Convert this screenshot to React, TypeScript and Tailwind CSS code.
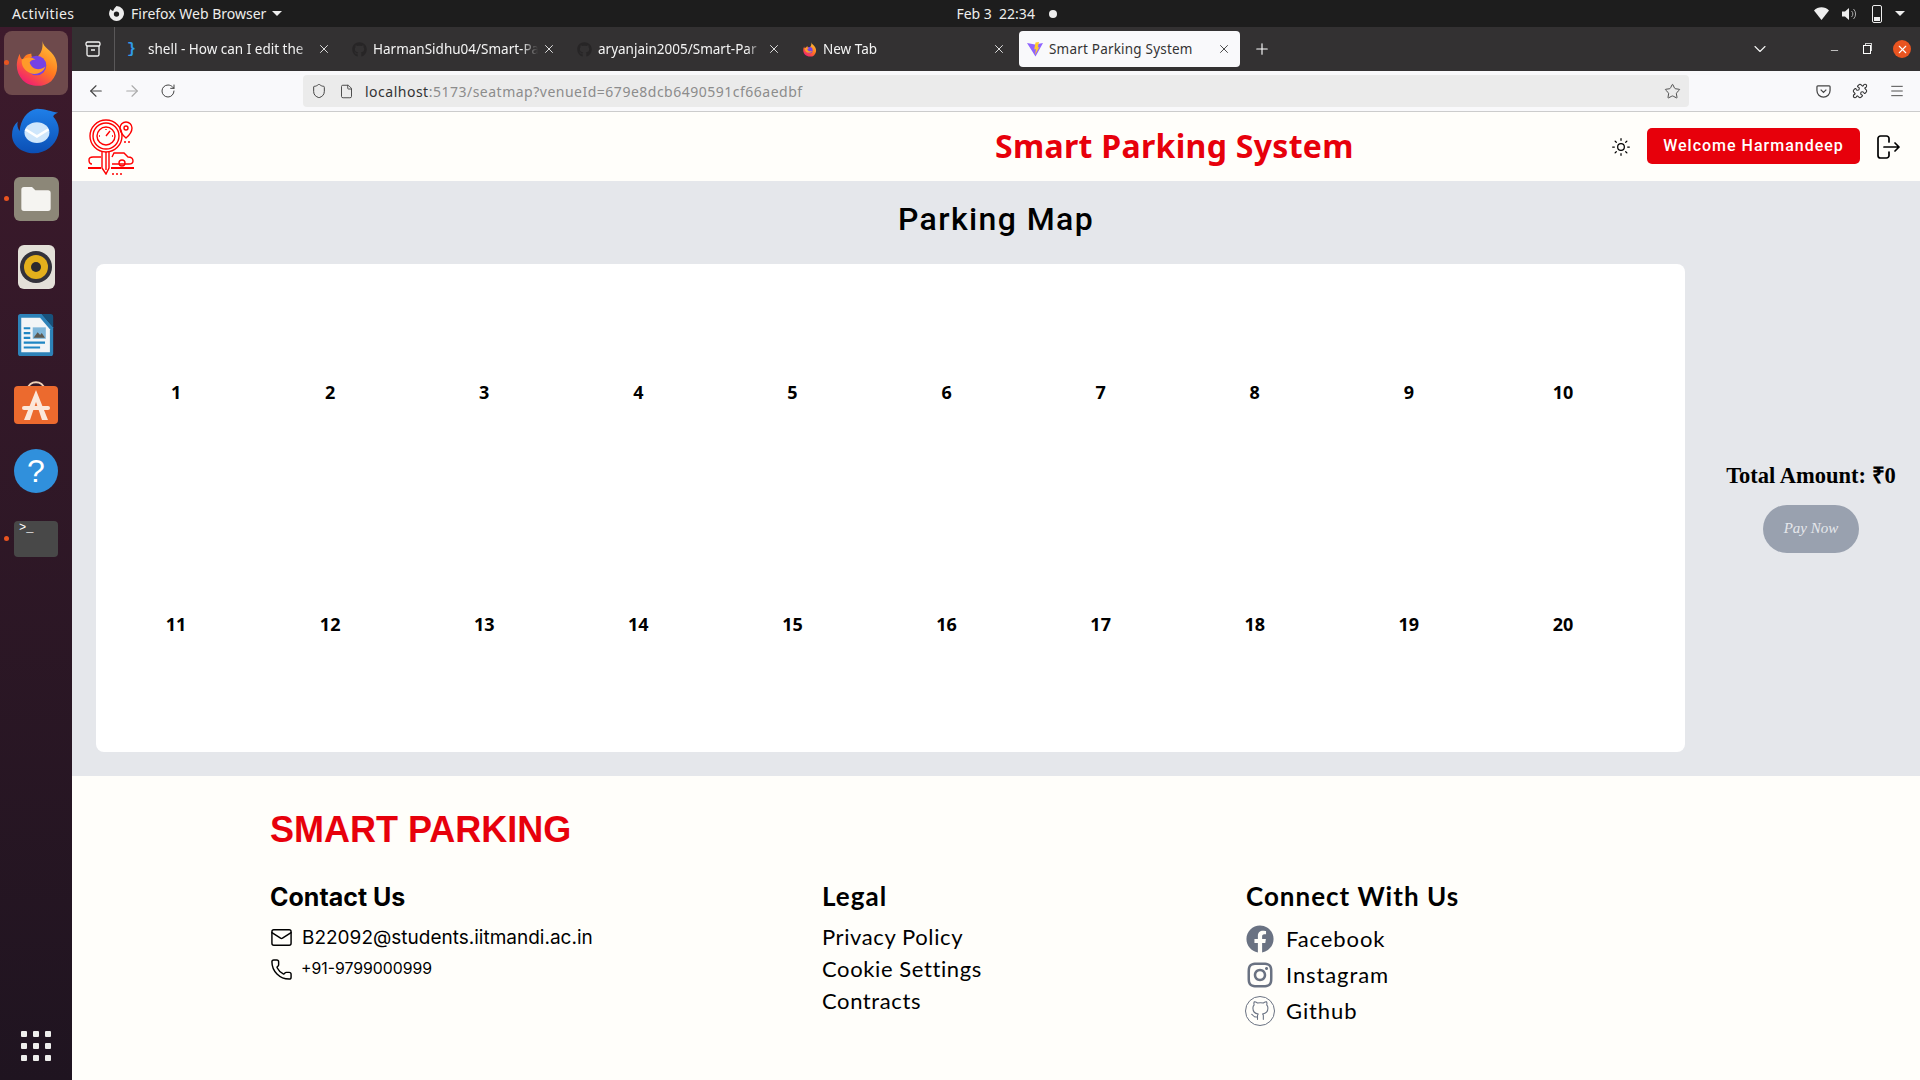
import { ArrowLeft, ArrowRight, ChevronDown, File, Mail, Menu, Minus, Phone, Plus, Puzzle, RotateCw, Shield, Star, Sun, X } from 'lucide-react';
import { FaFacebook, FaGithub } from 'react-icons/fa';
import { FiGithub } from 'react-icons/fi';
import { RiInstagramLine } from 'react-icons/ri';

const uiFont = "font-['Noto_Sans',sans-serif]";

const FirefoxIcon = ({ size = 16 }: { size?: number }) => (
  <svg width={size} height={size} viewBox="0 0 48 48">
    <defs>
      <linearGradient id="ffBody" x1="0.8" y1="0" x2="0.2" y2="1">
        <stop offset="0" stopColor="#ffc53a" />
        <stop offset="0.5" stopColor="#ff7a1f" />
        <stop offset="1" stopColor="#f0157a" />
      </linearGradient>
    </defs>
    <path d="M30 1c1 7 9 9 13 17 4 9 2 18-4 24-8 7-22 6-29-1C3 34 2 23 7 14c0 3 1 5 3 6 2-5 6-6 9-6-1 3 1 4 4 4 5-2 8-9 7-17z" fill="url(#ffBody)" />
    <circle cx="24" cy="26" r="10" fill="#7542e5" />
    <path d="M9 20c5-3 10-3 14 0-3 0-5 1-6 3 2 7 10 9 16 4-2 6-9 9-15 7-6-2-10-8-9-14z" fill="#ff9a2a" />
  </svg>
);

const ThunderbirdIcon = () => (
  <svg width="48" height="46" viewBox="0 0 50 58" preserveAspectRatio="none">
    <defs>
      <linearGradient id="tbBody" x1="0" y1="0" x2="0" y2="1">
        <stop offset="0" stopColor="#1f7fe8" />
        <stop offset="1" stopColor="#0b4fb5" />
      </linearGradient>
    </defs>
    <path d="M26 1c9 0 15 4 22 5-3 1-5 3-5 5 5 7 7 15 5 23-3 13-13 23-25 23C10 57 0 47 0 34c0-7 2-13 6-17-1 5 0 9 2 12C9 16 15 3 26 1z" fill="url(#tbBody)" />
    <circle cx="26" cy="31" r="13" fill="#cfe6fb" />
    <path d="M14 27l12 9 12-9" fill="none" stroke="#fff" strokeWidth="3" />
  </svg>
);

const FilesIcon = () => (
  <div className="flex h-[44px] w-[45px] items-center justify-center rounded-md bg-[#8c8778]">
    <svg width="32" height="28" viewBox="0 0 48 40">
      <path d="M2 6a4 4 0 0 1 4-4h12l5 5h19a4 4 0 0 1 4 4v23a4 4 0 0 1-4 4H6a4 4 0 0 1-4-4z" fill="#f5f4f1" />
    </svg>
  </div>
);

const RhythmboxIcon = () => (
  <div className="flex h-[44px] w-[37px] items-center justify-center rounded-md bg-[#e3e0d8]">
    <div className="flex h-[32px] w-[32px] items-center justify-center rounded-full bg-[#33323a]">
      <div className="flex h-[24px] w-[24px] items-center justify-center rounded-full bg-[#e3b01c]">
        <div className="h-[10px] w-[10px] rounded-full bg-[#2b2a2e]" />
      </div>
    </div>
  </div>
);

const WriterIcon = () => (
  <svg width="36" height="44" viewBox="0 0 44 46" preserveAspectRatio="none">
    <path d="M3 1h26l14 14v27a3 3 0 0 1-3 3H3a3 3 0 0 1-3-3V4a3 3 0 0 1 3-3z" fill="#2d82b8" />
    <path d="M4 5h23l12 12v24H4z" fill="#f2f5f7" />
    <path d="M29 1h11a3 3 0 0 1 3 3v11z" fill="#17527c" />
    <path d="M7 16h8M7 21h8M7 26h8M7 31h26M7 36h20" stroke="#1f86c4" strokeWidth="2.2" />
    <rect x="18" y="15" width="16" height="12" fill="#7fb6d9" />
    <path d="M19 26l5-6 3 3 2-2 4 5z" fill="#5e5a50" />
  </svg>
);

const SoftwareIcon = () => (
  <svg width="44" height="46" viewBox="0 0 44 46">
    <path d="M14 9c0-9 16-9 16 0" fill="none" stroke="#f0d2b8" strokeWidth="2" />
    <rect x="0" y="6" width="44" height="38" rx="4" fill="#ec6a2e" />
    <path d="M22 10l12 30h-6l-6-18-6 18h-6z" fill="#fbe7da" />
    <rect x="8" y="26" width="28" height="4" rx="2" fill="#fbe7da" />
  </svg>
);

const HelpIcon = () => (
  <div className="flex h-[44px] w-[44px] items-center justify-center rounded-full bg-[#3090dc] text-[32px] text-white font-['Liberation_Sans',sans-serif]">?</div>
);

const TerminalIcon = () => (
  <div className="h-[36px] w-[44px] rounded bg-[#484848] px-[5px] pt-[1px] text-[12px] leading-none text-white font-['Liberation_Mono',monospace]">&gt;_</div>
);

const DockItem = ({ children, running = false, active = false }: { children: React.ReactNode; running?: boolean; active?: boolean }) => (
  <div className={`relative flex h-[64px] w-[64px] items-center justify-center rounded-lg ${active ? 'bg-[#6e4a4c]' : ''}`}>
    {running && <span className="absolute left-0 top-[29px] h-[5px] w-[5px] rounded-full bg-[#e95420]" />}
    {children}
  </div>
);

const LogoIcon = () => (
  <svg width="46" height="56" viewBox="0 0 46 56" fill="none" stroke="#f00" strokeWidth="1.4">
    <circle cx="18" cy="17" r="16" />
    <circle cx="18" cy="17" r="13" />
    <circle cx="18" cy="17" r="9" />
    <path d="M18 17l4-5M18 10v1M11 17h1M25 17h-1" />
    <path d="M38 3a6 6 0 0 1 6 6c0 5-6 10-6 10s-6-5-6-10a6 6 0 0 1 6-6z" />
    <circle cx="38" cy="9" r="2" />
    <path d="M36 23h8" strokeDasharray="2 2" />
    <path d="M14 32v17l4 6 3-6V32" />
    <path d="M18 33v18" />
    <path d="M4 45c-2 0-3-2-3-4s2-3 4-3h8M24 38l2-4h10l4 4c3 0 5 1 5 4s-2 3-4 3H24" />
    <circle cx="34" cy="44" r="3" />
    <path d="M0 49h13M23 49h23" strokeWidth="2" />
    <path d="M24 55h12" strokeDasharray="2 2" />
  </svg>
);

const ViteIcon = () => (
  <svg width="16" height="16" viewBox="0 0 16 16">
    <path d="M0 2l8 1.5L16 2 8.5 15.5z" fill="#8f63ff" />
    <path d="M8.5 1.5L12 1l-1.2 5.5 1.6-.4-4.4 8 1-6-1.8.4z" fill="#ffcb2e" />
  </svg>
);

const LogoutIcon = () => (
  <svg width="24" height="24" viewBox="0 0 24 24" fill="none" stroke="#000" strokeWidth="1.7" strokeLinecap="round" strokeLinejoin="round">
    <path d="M13 7V3.500A2.500 2.500 0 0 0 10.500 1h-6A2.500 2.500 0 0 0 2 3.500v17A2.500 2.500 0 0 0 4.500 23h6a2.500 2.500 0 0 0 2.500-2.500V17" />
    <path d="M8 12h15M19 8l4 4-4 4" />
  </svg>
);

const tabs = [
  { title: 'shell - How can I edit the', icon: <span className="w-[14px] text-[15px] font-bold leading-none text-[#2f9bea] font-['Liberation_Mono',monospace]">{'}'}</span> },
  { title: 'HarmanSidhu04/Smart-Pa', icon: <FaGithub size={15} className="text-[#272526]" /> },
  { title: 'aryanjain2005/Smart-Par', icon: <FaGithub size={15} className="text-[#272526]" /> },
  { title: 'New Tab', icon: <FirefoxIcon size={15} /> },
];

const Tab = ({ title, icon }: { title: string; icon: React.ReactNode }) => (
  <div className="flex h-[36px] w-[225px] items-center pl-[8px] pr-[13px] text-[13.5px] text-[#f4f4f4]">
    <span className="flex w-[21px] shrink-0 items-center">{icon}</span>
    <span className="w-[165px] whitespace-nowrap [mask-image:linear-gradient(to_right,black_90%,transparent)]">{title}</span>
    <X size={14} strokeWidth={1.5} className="ml-auto shrink-0" />
  </div>
);

const TopBar = () => (
  <div className={`flex h-[27px] shrink-0 items-center bg-[#1d1d1d] text-[14px] text-[#eeeeec] ${uiFont}`}>
    <span className="ml-[12px] w-[96px] tracking-[0.4px]">Activities</span>
    <svg width="17" height="17" viewBox="0 0 16 16" fill="#eee"><path d="M8 1a7 7 0 1 1-5.500 2.700C3 5 4 5.500 5 5.300 5.500 3.500 7 2 8 1zm0 5a2.500 2.500 0 1 0 0 5 2.500 2.500 0 0 0 0-5z" /></svg>
    <span className="ml-[6px]">Firefox Web Browser</span>
    <span className="ml-[6px] h-0 w-0 border-x-[5px] border-t-[5px] border-x-transparent border-t-[#eee]" />
    <span className="ml-[674px]">Feb 3&nbsp;&nbsp;22:34</span>
    <span className="ml-[14px] h-[8px] w-[8px] rounded-full bg-[#eee]" />
    <div className="ml-auto mr-[15px] flex items-center gap-[13px]">
      <svg width="15" height="13" viewBox="0 0 15 13" fill="#eee"><path d="M0 3.500C4-.8 11-.8 15 3.500L7.500 13z" /></svg>
      <svg width="15" height="14" viewBox="0 0 15 14" fill="#eee"><path d="M0 4.500h3L7 1v12L3 9.500H0z" /><path d="M9.500 4a4 4 0 0 1 0 6M11.500 2a7 7 0 0 1 0 10" fill="none" stroke="#aaa" /></svg>
      <div className="ml-[2px] flex h-[18px] w-[10px] flex-col justify-end rounded-[2px] border border-[#eee] p-[1px]"><div className="h-[4px] bg-[#eee]" /></div>
      <span className="h-0 w-0 border-x-[5px] border-t-[5px] border-x-transparent border-t-[#eee]" />
    </div>
  </div>
);

const Dock = () => (
  <div className="flex w-[72px] shrink-0 flex-col items-center gap-[4px] bg-gradient-to-b from-[#3d1a2c] to-[#1f1420] pt-[4px]">
    <DockItem running active><FirefoxIcon size={47} /></DockItem>
    <DockItem><ThunderbirdIcon /></DockItem>
    <DockItem running><FilesIcon /></DockItem>
    <DockItem><RhythmboxIcon /></DockItem>
    <DockItem><WriterIcon /></DockItem>
    <DockItem><SoftwareIcon /></DockItem>
    <DockItem><HelpIcon /></DockItem>
    <DockItem running><TerminalIcon /></DockItem>
    <div className="mb-[19px] mt-auto grid grid-cols-3 gap-[6px]">
      {Array.from({ length: 9 }).map((_, i) => (
        <span key={i} className="h-[6px] w-[6px] rounded-[1px] bg-[#eeeeec]" />
      ))}
    </div>
  </div>
);

const BrowserChrome = () => (
  <div className={`shrink-0 ${uiFont}`}>
    <div className="flex h-[44px] items-center bg-[#333132]">
      <div className="flex h-full w-[43px] items-center justify-center border-r border-[#5a5859]">
        <svg width="16" height="16" viewBox="0 0 16 16" fill="none" stroke="#f4f4f4" strokeWidth="1.3"><rect x="1" y="1" width="14" height="4" rx="1.500" /><path d="M2 5v8.500a1.500 1.500 0 0 0 1.500 1.500h9a1.500 1.500 0 0 0 1.500-1.500V5M6 9h4" /></svg>
      </div>
      <div className="ml-[4px] flex">
        {tabs.map((t) => <Tab key={t.title} title={t.title} icon={t.icon} />)}
      </div>
      <div className="flex h-[36px] w-[221px] items-center rounded bg-[#f9f9fb] pl-[8px] pr-[9px] text-[13.5px] tracking-[0.2px] text-[#333]">
        <span className="flex w-[22px] shrink-0"><ViteIcon /></span>
        <span>Smart Parking System</span>
        <X size={14} strokeWidth={1.5} className="ml-auto" />
      </div>
      <Plus size={18} strokeWidth={1.5} className="ml-[13px] text-white" />
      <ChevronDown size={20} strokeWidth={1.3} className="ml-[479px] text-[#f4f4f4]" />
      <Minus size={11} strokeWidth={1.5} className="ml-[59px] mt-[3px] text-white" />
      <div className="relative ml-[23px] h-[9px] w-[8px]">
        <div className="absolute left-[2px] top-[-2px] h-[8px] w-[7px] border border-[#ccc]" />
        <div className="absolute inset-0 border border-white bg-[#333132]" />
      </div>
      <div className="ml-[22px] flex h-[18px] w-[18px] items-center justify-center rounded-full bg-[#e95420]"><X size={13} className="text-white" /></div>
    </div>
    <div className="flex h-[41px] items-center border-b border-[#ccc] bg-[#f9f9fb] text-[#444]">
      <ArrowLeft size={18} strokeWidth={1.5} className="ml-[15px]" />
      <ArrowRight size={18} strokeWidth={1.5} className="ml-[18px] text-[#aaa]" />
      <RotateCw size={16} strokeWidth={1.5} className="ml-[19px]" />
      <div className="ml-[127px] flex h-[32px] w-[1386px] items-center rounded bg-[#ebebeb] pl-[8px] pr-[8px] text-[14px] tracking-[0.5px]">
        <Shield size={16} strokeWidth={1.5} />
        <File size={15} strokeWidth={1.5} className="ml-[12px]" />
        <span className="ml-[11px] text-[#333]">localhost</span>
        <span className="text-[#8c8c8c]">:5173/seatmap?venueId=679e8dcb6490591cf66aedbf</span>
        <Star size={17} strokeWidth={1.3} className="ml-auto" />
      </div>
      <svg width="15" height="15" viewBox="0 0 16 16" fill="none" stroke="#444" strokeWidth="1.3" className="ml-[127px]"><path d="M2 2h12a1 1 0 0 1 1 1v4a7 7 0 0 1-14 0V3a1 1 0 0 1 1-1zM5 6l3 3 3-3" /></svg>
      <Puzzle size={16} strokeWidth={1.6} className="ml-[21px] text-[#333]" />
      <Menu size={16} strokeWidth={1.4} className="ml-[21px]" />
    </div>
  </div>
);

const Header = () => (
  <div className="flex h-[69px] shrink-0 items-center bg-[#fffefa] pl-[16px]">
    <LogoIcon />
    <h1 className="mb-[2px] ml-[861px] whitespace-nowrap text-[32px] font-bold leading-[40px] tracking-[0.3px] text-[#e7000b] font-['Noto_Sans',sans-serif]">Smart Parking System</h1>
    <Sun size={20} strokeWidth={1.5} className="ml-auto text-black" />
    <button className="mb-[1px] ml-[16px] h-[36px] w-[213px] rounded-[5px] bg-red-600 text-[16px] font-medium tracking-[1px] text-white font-['Roboto',sans-serif]">Welcome Harmandeep</button>
    <span className="ml-[16px] mr-[20px] shrink-0"><LogoutIcon /></span>
  </div>
);

const ParkingMap = () => (
  <div className="flex min-h-0 flex-1 flex-col bg-gray-200">
    <h2 className="h-[83px] pt-[18px] text-center text-[32px] font-medium leading-[40px] tracking-[1.4px] text-black font-['Roboto',sans-serif]">Parking Map</h2>
    <div className="flex flex-1 pb-[24px] pl-[24px]">
      <div className="w-[1589px] rounded-lg bg-white py-[12px] pl-[3px]">
        <div className="grid w-[1541px] grid-cols-10 grid-rows-[232px_232px] text-center text-[18px] font-bold leading-[232px] text-black font-['Noto_Sans',sans-serif]">
          {Array.from({ length: 20 }).map((_, i) => (
            <span key={i}>{i + 1}</span>
          ))}
        </div>
      </div>
      <div className="flex flex-1 flex-col items-center justify-center gap-[15px] pb-[2px] pl-[17px]">
        <p className="whitespace-nowrap text-[22.5px] font-bold leading-[28px] text-black font-['Liberation_Serif',serif]">Total Amount: ₹0</p>
        <button className="h-[48px] w-[96px] rounded-full bg-gray-400 text-[15px] italic text-[#e5e7eb] font-['Liberation_Serif',serif]">Pay Now</button>
      </div>
    </div>
  </div>
);

const Footer = () => (
  <div className="h-[304px] shrink-0 bg-[#fffefa] pl-[198px] text-black">
    <h3 className="pt-[32px] text-[36px] font-bold leading-[44px] text-red-600 font-['Liberation_Sans',sans-serif]">SMART PARKING</h3>
    <div className="mt-[29px] grid grid-cols-[552px_424px_1fr]">
      <div className="font-['Inter',sans-serif]">
        <h4 className="text-[25px] font-bold leading-[32px]">Contact Us</h4>
        <div className="mt-[10px] flex h-[30px] items-center gap-[9px] text-[19px]">
          <Mail size={23} strokeWidth={1.5} className="-mt-[2px]" />
          <span>B22092@students.iitmandi.ac.in</span>
        </div>
        <div className="mt-[1px] flex h-[30px] items-center gap-[8px] text-[15.8px]">
          <Phone size={23} strokeWidth={1.5} />
          <span>+91-9799000999</span>
        </div>
      </div>
      <div className="-mt-[1px] font-['Lato',sans-serif]">
        <h4 className="text-[26px] font-bold leading-[32px] tracking-[1px]">Legal</h4>
        <ul className="mt-[10px] space-y-[2px] text-[22px] leading-[30px] tracking-[0.6px]">
          <li>Privacy Policy</li>
          <li>Cookie Settings</li>
          <li>Contracts</li>
        </ul>
      </div>
      <div className="-mt-[1px] font-['Lato',sans-serif]">
        <h4 className="text-[26px] font-bold leading-[32px] tracking-[1px]">Connect With Us</h4>
        <ul className="mt-[12px] space-y-[6px] text-[22px] leading-[30px] tracking-[0.9px]">
          <li className="flex items-center gap-[12px]"><FaFacebook size={28} className="text-gray-500" />Facebook</li>
          <li className="flex items-center gap-[12px]"><RiInstagramLine size={30} className="-mx-[1px] text-gray-500" />Instagram</li>
          <li className="flex items-center gap-[12px]">
            <span className="-mx-[1px] flex h-[30px] w-[30px] items-center justify-center rounded-full border border-gray-500 text-gray-500"><FiGithub size={20} strokeWidth={1.3} /></span>
            Github
          </li>
        </ul>
      </div>
    </div>
  </div>
);

export default function App() {
  return (
    <div className="flex h-[1080px] w-[1920px] flex-col overflow-hidden">
      <TopBar />
      <div className="flex min-h-0 flex-1">
        <Dock />
        <div className="flex min-w-0 flex-1 flex-col">
          <BrowserChrome />
          <Header />
          <ParkingMap />
          <Footer />
        </div>
      </div>
    </div>
  );
}
